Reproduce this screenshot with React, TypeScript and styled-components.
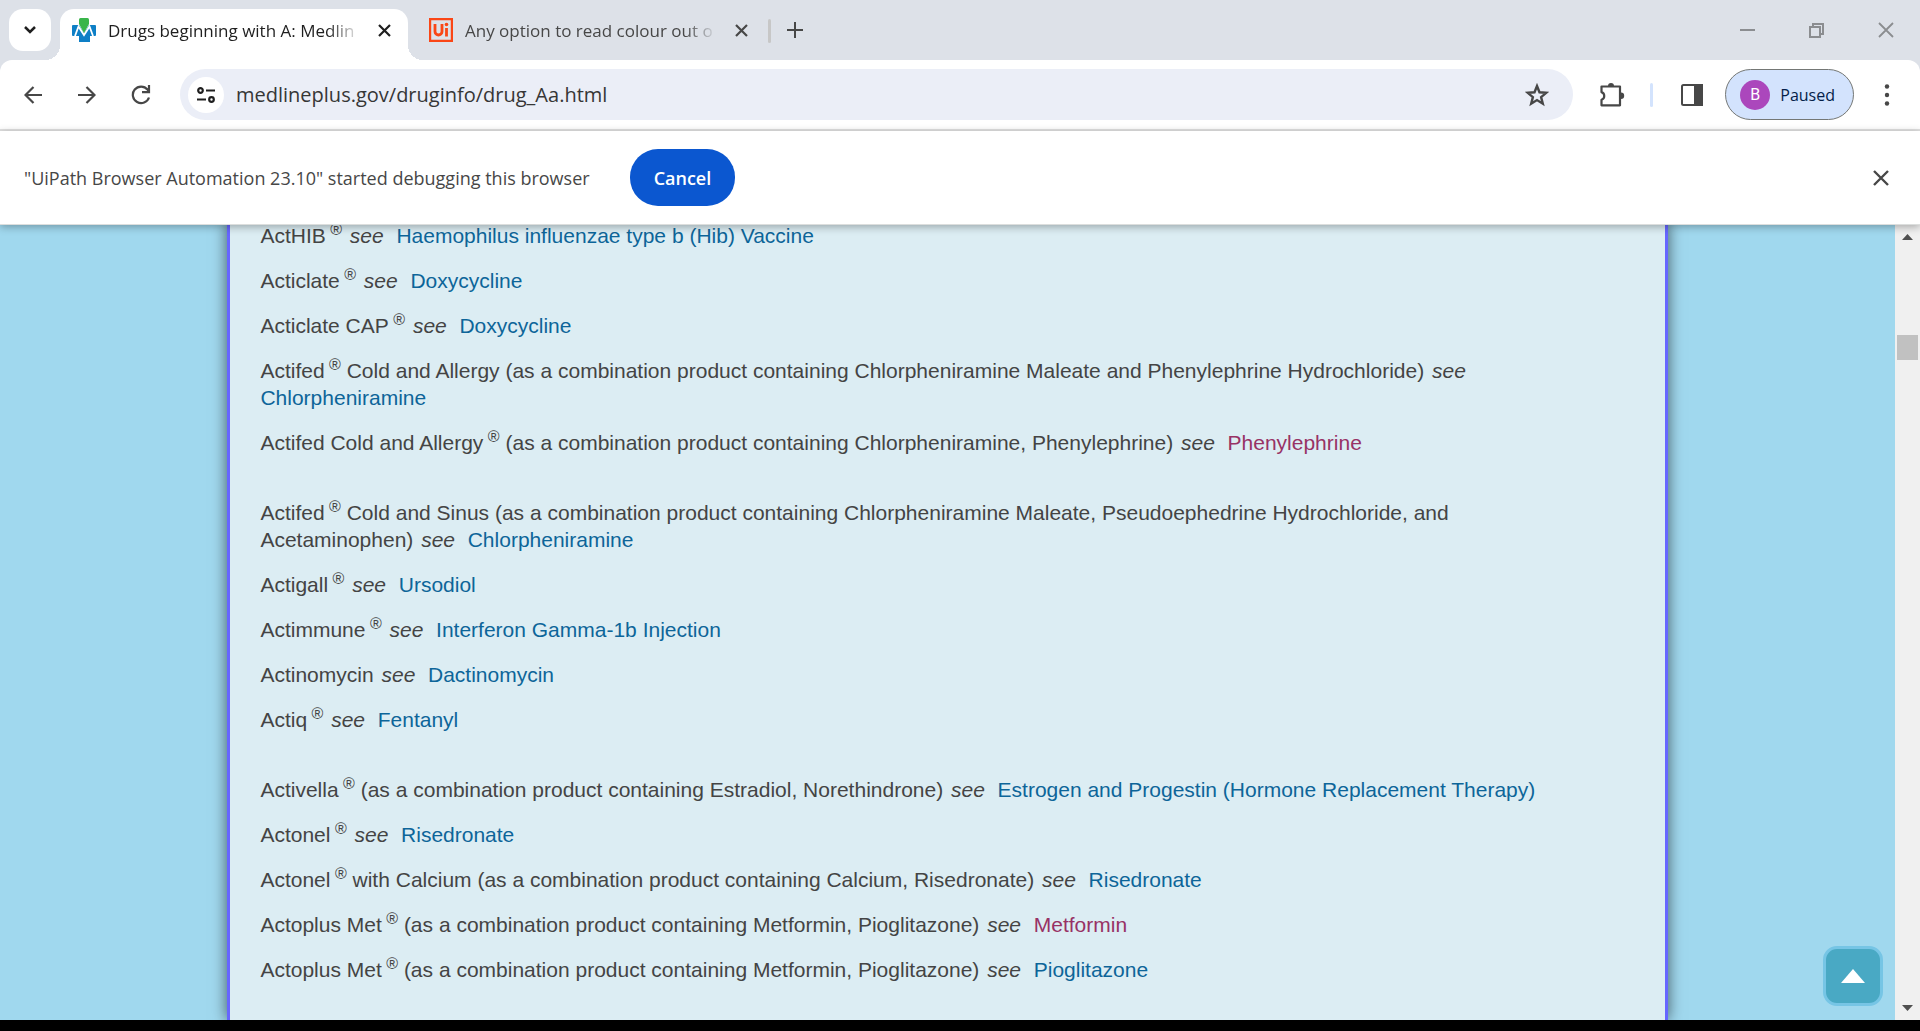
import React from "react";
import styled, { createGlobalStyle, css } from "styled-components";

const uiFont = `"Open Sans", "Noto Sans", sans-serif`;
const pageFont = `"Liberation Sans", Arial, sans-serif`;

const GlobalStyle = createGlobalStyle`
  *, *::before, *::after { box-sizing: border-box; }
  html, body, #root { height: 100%; }
  body { margin: 0; overflow: hidden; background: #000; }
  button, input { font: inherit; color: inherit; border: 0; padding: 0; margin: 0; background: none; }
  button { cursor: pointer; }
  svg { display: block; flex: none; }
`;

const Window = styled.div`
  display: flex;
  flex-direction: column;
  height: 100vh;
  padding-bottom: 11px;
  background: #000;
  font-family: ${uiFont};
  color: #1f1f1f;
`;

const center = css`
  display: flex;
  align-items: center;
  justify-content: center;
`;

const TabStrip = styled.header`
  display: flex;
  flex: none;
  height: 60px;
  padding: 9px 0 0 9px;
  background: #dde1e8;
`;

const TabSearch = styled.button`
  ${center}
  width: 42px;
  height: 42px;
  margin-right: 9px;
  border-radius: 14px;
  background: #fff;
`;

const Tab = styled.div<{ $active?: boolean }>`
  position: relative;
  display: flex;
  align-items: center;
  width: ${(p) => (p.$active ? 348 : 360)}px;
  height: 51px;
  padding: 0 ${(p) => (p.$active ? 16 : 19)}px 9px ${(p) => (p.$active ? 12 : 21)}px;
  border-radius: 14px 14px 0 0;
  background: ${(p) => (p.$active ? "#fff" : "transparent")};
  color: ${(p) => (p.$active ? "#1f1f1f" : "#474747")};

  ${(p) =>
    p.$active &&
    css`
      &::before,
      &::after {
        content: "";
        position: absolute;
        bottom: 0;
        width: 15px;
        height: 15px;
      }
      &::before {
        right: 100%;
        background: radial-gradient(circle at 0 0, transparent 15px, #fff 15px);
      }
      &::after {
        left: 100%;
        background: radial-gradient(circle at 100% 0, transparent 15px, #fff 15px);
      }
    `}
`;

const TabTitle = styled.button`
  flex: 1;
  min-width: 0;
  margin: 0 16px 0 12px;
  padding-top: 2px;
  overflow: hidden;
  font-size: 17px;
  line-height: 24px;
  text-align: left;
  white-space: nowrap;
  mask-image: linear-gradient(to right, #000 calc(100% - 32px), transparent);
`;

const IconButton = styled.button<{ $size?: number }>`
  ${center}
  flex: none;
  width: ${(p) => p.$size ?? 54}px;
  height: ${(p) => p.$size ?? 54}px;
  color: #474747;
`;

const TabClose = styled(IconButton)`
  color: inherit;
`;

const StripDivider = styled.span`
  width: 3px;
  height: 24px;
  margin: 10px 12px 0 0;
  border-radius: 2px;
  background: #c7c7c7;
`;

const NewTab = styled.button`
  ${center}
  width: 24px;
  height: 42px;
  color: #474747;
`;

const WindowControls = styled.div`
  display: flex;
  height: 42px;
  margin-left: auto;
  color: #8b8d90;
`;

const WindowButton = styled.button`
  ${center}
  width: 69px;
`;

const ToolbarBack = styled.div`
  flex: none;
  background: #dde1e8;
`;

const Toolbar = styled.nav`
  display: flex;
  align-items: center;
  height: 71px;
  padding: 0 6px;
  border-bottom: 2px solid #e1e1e1;
  border-radius: 12px 12px 0 0;
  background: #fff;
`;

const Omnibox = styled.form`
  display: flex;
  flex: 1;
  align-items: center;
  height: 51px;
  margin: 0 12px;
  padding: 0 9px 0 8px;
  border-radius: 26px;
  background: #ebeef7;
`;

const SiteInfo = styled.button`
  ${center}
  flex: none;
  width: 36px;
  height: 36px;
  border-radius: 50%;
  background: #fff;
`;

const Address = styled.input`
  flex: 1;
  min-width: 0;
  margin-left: 12px;
  color: #363636;
  font-size: 20px;
  line-height: 28px;
  outline: 0;
`;

const ToolbarDivider = styled.span`
  width: 3px;
  height: 24px;
  margin: 0 12px 0 11px;
  border-radius: 2px;
  background: #d3e3fd;
`;

const Profile = styled.button`
  display: flex;
  align-items: center;
  gap: 10px;
  height: 51px;
  margin: 0 6px;
  padding: 0 18px 0 14px;
  border: 1px solid #747775;
  border-radius: 26px;
  background: #d3e3fd;
  color: #041e49;
  font-size: 16px;
`;

const Avatar = styled.span`
  ${center}
  width: 30px;
  height: 30px;
  border-radius: 50%;
  background: #ab47bc;
  color: #fff;
  font-family: Roboto, sans-serif;
  font-size: 16px;
`;

const InfoBar = styled.section`
  position: relative;
  z-index: 1;
  display: flex;
  flex: none;
  align-items: center;
  height: 94px;
  padding: 0 12px 0 24px;
  border-bottom: 1px solid #dcdedd;
  background: #fff;
  box-shadow: 0 2px 8px rgba(0, 0, 0, 0.3);
  color: #474747;
  font-size: 18px;
`;

const InfoText = styled.p`
  flex: none;
  margin: 0 40px 0 0;
`;

const CancelButton = styled.button`
  height: 57px;
  margin-right: auto;
  padding: 0 24px;
  border-radius: 28px;
  background: #0b57d0;
  color: #fff;
  font-weight: 600;
`;

const Viewport = styled.div`
  position: relative;
  display: flex;
  flex: 1;
  min-height: 0;
  overflow: hidden;
  background: #a0d8ee;
`;

const PageScroll = styled.div`
  display: flex;
  flex: 1;
  justify-content: center;
  overflow: hidden;
`;

const Article = styled.main`
  width: 76%;
  margin-top: -3px;
  padding: 0 100px 0 30px;
  border: solid #6666ff;
  border-width: 0 3px;
  background: #dcedf3;
  box-shadow: 0 0 14px rgba(0, 0, 0, 0.6);
  color: #444;
  font-family: ${pageFont};
  font-size: 21px;
  line-height: 27px;
`;

const DrugGroup = styled.ul`
  display: flex;
  flex-direction: column;
  gap: 18px;
  margin: 0 0 43px;
  padding: 0;
  list-style: none;
`;

const Mark = styled.sup`
  position: relative;
  top: -8px;
  font-size: 16px;
  line-height: 0;
  vertical-align: baseline;
`;

const See = styled.em`
  margin: 0 1px 0 2px;
`;

const DrugLink = styled.a<{ $visited?: boolean }>`
  color: ${(p) => (p.$visited ? "#983265" : "#0d6599")};
  text-decoration: none;
`;

const Scrollbar = styled.div`
  display: flex;
  flex: none;
  flex-direction: column;
  align-items: center;
  width: 25px;
  background: #f0f0f0;
  color: #505050;
`;

const Thumb = styled.div`
  width: 21px;
  height: 25px;
  margin: 85px 0 auto;
  background: #c1c1c1;
`;

const BackToTop = styled.a`
  ${center}
  position: absolute;
  right: 37px;
  bottom: 14px;
  width: 60px;
  height: 60px;
  border: 3px solid #76c5e5;
  border-radius: 14px;
  background: #49a9c4;
  color: #fff;
`;

type Drug = { name: string; mark?: boolean; rest?: string; to: string; visited?: boolean };

const groups: Drug[][] = [
  [
    { name: "ActHIB", mark: true, to: "Haemophilus influenzae type b (Hib) Vaccine" },
    { name: "Acticlate", mark: true, to: "Doxycycline" },
    { name: "Acticlate CAP", mark: true, to: "Doxycycline" },
    {
      name: "Actifed",
      mark: true,
      rest: "Cold and Allergy (as a combination product containing Chlorpheniramine Maleate and Phenylephrine Hydrochloride)",
      to: "Chlorpheniramine",
    },
    {
      name: "Actifed Cold and Allergy",
      mark: true,
      rest: "(as a combination product containing Chlorpheniramine, Phenylephrine)",
      to: "Phenylephrine",
      visited: true,
    },
  ],
  [
    {
      name: "Actifed",
      mark: true,
      rest: "Cold and Sinus (as a combination product containing Chlorpheniramine Maleate, Pseudoephedrine Hydrochloride, and Acetaminophen)",
      to: "Chlorpheniramine",
    },
    { name: "Actigall", mark: true, to: "Ursodiol" },
    { name: "Actimmune", mark: true, to: "Interferon Gamma-1b Injection" },
    { name: "Actinomycin", to: "Dactinomycin" },
    { name: "Actiq", mark: true, to: "Fentanyl" },
  ],
  [
    {
      name: "Activella",
      mark: true,
      rest: "(as a combination product containing Estradiol, Norethindrone)",
      to: "Estrogen and Progestin (Hormone Replacement Therapy)",
    },
    { name: "Actonel", mark: true, to: "Risedronate" },
    {
      name: "Actonel",
      mark: true,
      rest: "with Calcium (as a combination product containing Calcium, Risedronate)",
      to: "Risedronate",
    },
    {
      name: "Actoplus Met",
      mark: true,
      rest: "(as a combination product containing Metformin, Pioglitazone)",
      to: "Metformin",
      visited: true,
    },
    {
      name: "Actoplus Met",
      mark: true,
      rest: "(as a combination product containing Metformin, Pioglitazone)",
      to: "Pioglitazone",
    },
  ],
];

function DrugEntry({ drug }: { drug: Drug }) {
  return (
    <li>
      {drug.name}
      {drug.mark && <Mark>{" ®"}</Mark>} {drug.rest && `${drug.rest} `}
      <See>see</See>
      {"\u00a0 "}
      <DrugLink href="#" $visited={drug.visited}>
        {drug.to}
      </DrugLink>
    </li>
  );
}

const Cross = ({ size, stroke = 2 }: { size: number; stroke?: number }) => (
  <svg width={size} height={size} viewBox={`0 0 ${size} ${size}`} fill="none" stroke="currentColor" strokeWidth={stroke}>
    <path d={`M1 1L${size - 1} ${size - 1}M${size - 1} 1L1 ${size - 1}`} />
  </svg>
);

const Triangle = ({ down }: { down?: boolean }) => (
  <svg width="25" height="25" viewBox="0 0 25 25" fill="currentColor">
    <path d={down ? "M7 10h11l-5.500 6z" : "M7 15h11l-5.500 -6z"} />
  </svg>
);

const MedlineLogo = () => (
  <svg width="24" height="24" viewBox="0 0 24 24">
    <path fill="#0e7fc6" d="M1 7h6l5 8 5-8h6a1 1 0 0 1 1 1v9a1 1 0 0 1-1 1h-5v6H7v-6H1a1 1 0 0 1-1-1V8a1 1 0 0 1 1-1z" />
    <path fill="none" stroke="#fff" strokeWidth="1.800" d="M3 18L6.500 8.500 12 17l5.500-8.500L21 18" />
    <path fill="#39b54a" d="M7 1.500A1.500 1.500 0 0 1 8.500 0h7A1.500 1.500 0 0 1 17 1.500V6l-5 9-5-9z" />
  </svg>
);

const UiLogo = () => (
  <svg width="24" height="24" viewBox="0 0 24 24" fill="none" stroke="#fa4616">
    <path strokeWidth="2.400" d="M1 1h22v22H1z" />
    <path strokeWidth="2.800" d="M6 6v7.500a3.500 3.500 0 0 0 7 0V6M17.500 10v8.500" />
    <circle cx="17.500" cy="6.500" r="1.800" fill="#fa4616" stroke="none" />
  </svg>
);

export default function App() {
  return (
    <Window>
      <GlobalStyle />
      <TabStrip>
        <TabSearch aria-label="Search tabs">
          <svg width="12" height="8" viewBox="0 0 12 8" fill="none" stroke="#1f1f1f" strokeWidth="2.500">
            <path d="M1 1l5 5 5-5" />
          </svg>
        </TabSearch>
        <Tab $active>
          <MedlineLogo />
          <TabTitle>Drugs beginning with A: Medlin</TabTitle>
          <TabClose $size={16} aria-label="Close tab">
            <Cross size={13} stroke={2.2} />
          </TabClose>
        </Tab>
        <Tab>
          <UiLogo />
          <TabTitle>Any option to read colour out o</TabTitle>
          <TabClose $size={16} aria-label="Close tab">
            <Cross size={13} stroke={2.2} />
          </TabClose>
        </Tab>
        <StripDivider />
        <NewTab aria-label="New tab">
          <svg width="16" height="16" viewBox="0 0 16 16" stroke="currentColor" strokeWidth="2">
            <path d="M8 0v16M0 8h16" />
          </svg>
        </NewTab>
        <WindowControls>
          <WindowButton aria-label="Minimize">
            <svg width="15" height="15" viewBox="0 0 15 15" fill="currentColor">
              <path d="M0 6h15v2H0z" />
            </svg>
          </WindowButton>
          <WindowButton aria-label="Restore">
            <svg width="15" height="15" viewBox="0 0 15 15" fill="none" stroke="currentColor" strokeWidth="2">
              <path d="M1 4h10v10H1zM4 4V1h10v10h-3" />
            </svg>
          </WindowButton>
          <WindowButton aria-label="Close">
            <Cross size={16} stroke={1.8} />
          </WindowButton>
        </WindowControls>
      </TabStrip>

      <ToolbarBack>
        <Toolbar>
          <IconButton aria-label="Back">
            <svg width="18" height="18" viewBox="0 0 18 18" fill="none" stroke="currentColor" strokeWidth="2.200">
              <path d="M18 9H2M9.500 1L1.500 9l8 8" />
            </svg>
          </IconButton>
          <IconButton aria-label="Forward">
            <svg width="18" height="18" viewBox="0 0 18 18" fill="none" stroke="currentColor" strokeWidth="2.200">
              <path d="M0 9h16M8.500 1l8 8-8 8" />
            </svg>
          </IconButton>
          <IconButton aria-label="Reload">
            <svg width="20" height="20" viewBox="0 0 20 20" fill="none" stroke="currentColor" strokeWidth="2.200">
              <path d="M18 12.500A8.300 8.300 0 1 1 16.500 4.500L18 6.500M18 0v7.200h-7" />
            </svg>
          </IconButton>
          <Omnibox>
            <SiteInfo type="button" aria-label="View site information">
              <svg width="18" height="16" viewBox="0 0 18 16" fill="none" stroke="#1f1f1f" strokeWidth="2.200">
                <circle cx="3.500" cy="3.500" r="2.300" />
                <circle cx="14.500" cy="12.500" r="2.300" />
                <path d="M9 3.500h9M0 12.500h9" />
              </svg>
            </SiteInfo>
            <Address aria-label="Address" defaultValue="medlineplus.gov/druginfo/drug_Aa.html" />
            <IconButton type="button" aria-label="Bookmark this tab">
              <svg width="24" height="24" viewBox="0 0 24 24" fill="none" stroke="currentColor" strokeWidth="2.400">
                <path d="M12 3l2.500 6.300 6.800.5-5.200 4.300 1.700 6.600L12 17.100l-5.800 3.600 1.700-6.600-5.200-4.300 6.800-.5z" />
              </svg>
            </IconButton>
          </Omnibox>
          <IconButton aria-label="Extensions">
            <svg width="26" height="26" viewBox="0 0 26 26" fill="none" stroke="currentColor" strokeWidth="2.200">
              <path strokeLinejoin="round" d="M2.500 4.500H21v18.800H2.500v-5.600a4 4 0 0 0 0-7.600z" />
              <path fill="currentColor" stroke="none" d="M9 4a3 3 0 0 1 6 0zM22 10.500a3.200 3.200 0 0 1 0 6.400z" />
            </svg>
          </IconButton>
          <ToolbarDivider />
          <IconButton aria-label="Side panel">
            <svg width="22" height="22" viewBox="0 0 22 22" fill="none" stroke="currentColor" strokeWidth="2">
              <rect x="1" y="1" width="20" height="20" rx="1.500" />
              <path fill="currentColor" d="M14 1h7v20h-7z" />
            </svg>
          </IconButton>
          <Profile>
            <Avatar>B</Avatar>
            Paused
          </Profile>
          <IconButton aria-label="Menu">
            <svg width="6" height="22" viewBox="0 0 6 22" fill="currentColor">
              <circle cx="3" cy="2.500" r="2.200" />
              <circle cx="3" cy="11" r="2.200" />
              <circle cx="3" cy="19.500" r="2.200" />
            </svg>
          </IconButton>
        </Toolbar>
      </ToolbarBack>

      <InfoBar>
        <InfoText>"UiPath Browser Automation 23.10" started debugging this browser</InfoText>
        <CancelButton>Cancel</CancelButton>
        <IconButton aria-label="Dismiss">
          <Cross size={16} stroke={2.4} />
        </IconButton>
      </InfoBar>

      <Viewport>
        <PageScroll>
          <Article>
            {groups.map((group, g) => (
              <DrugGroup key={g}>
                {group.map((drug, i) => (
                  <DrugEntry key={i} drug={drug} />
                ))}
              </DrugGroup>
            ))}
          </Article>
        </PageScroll>
        <Scrollbar>
          <Triangle />
          <Thumb />
          <Triangle down />
        </Scrollbar>
        <BackToTop href="#" aria-label="Back to top">
          <svg width="24" height="16" viewBox="0 0 24 16" fill="currentColor">
            <path d="M0 15L12 1l12 14z" />
          </svg>
        </BackToTop>
      </Viewport>
    </Window>
  );
}
